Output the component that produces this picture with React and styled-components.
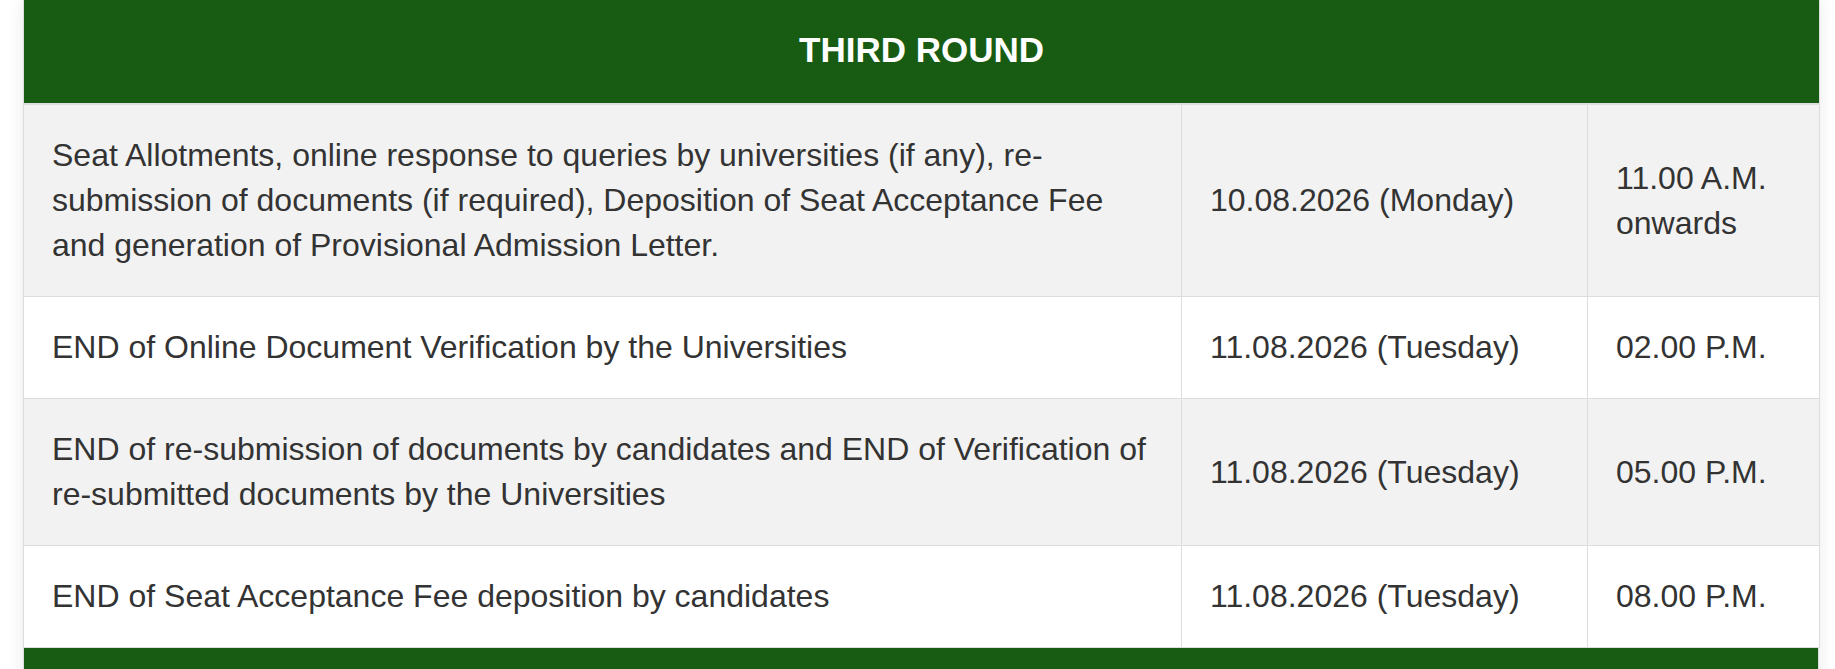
import React from "react";
import styled, { createGlobalStyle } from "styled-components";

const GlobalStyle = createGlobalStyle`
  html, body {
    margin: 0;
    padding: 0;
    background: #ffffff;
    font-family: "Liberation Sans", Arial, Helvetica, sans-serif;
  }
`;

const Page = styled.div`
  padding: 0 16px 0 23px;
`;

const Card = styled.section`
  box-shadow: 0 0 16px rgba(0, 0, 0, 0.09);
  background: #ffffff;
`;

const Table = styled.table`
  width: 100%;
  border-collapse: collapse;
  table-layout: fixed;
  border: 1px solid #dddddd;
  border-top: none;
`;

const HeadCell = styled.th`
  background: #175c12;
  color: #ffffff;
  font-size: 35px;
  font-weight: 700;
  line-height: 50px;
  text-align: center;
  padding: 25px 28px 28px;
  border: 1px solid #dddddd;
  border-top: none;
  border-bottom: 2px solid #dddddd;
`;

const Row = styled.tr`
  background: ${(p) => (p.$striped ? "#f2f2f2" : "#ffffff")};
`;

const Cell = styled.td`
  padding: 28px;
  font-size: 32px;
  line-height: 45px;
  color: #333333;
  border: 1px solid #dddddd;
  vertical-align: middle;
  text-align: left;
`;

const NextHead = styled.th`
  background: #175c12;
  color: #ffffff;
  font-size: 35px;
  font-weight: 700;
  line-height: 50px;
  text-align: center;
  padding: 28px;
  border: 1px solid #dddddd;
  border-top: none;
`;

const rows = [
  {
    event:
      "Seat Allotments, online response to queries by universities (if any), re-submission of documents (if required), Deposition of Seat Acceptance Fee and generation of Provisional Admission Letter.",
    date: "10.08.2026 (Monday)",
    time: "11.00 A.M. onwards",
  },
  {
    event: "END of Online Document Verification by the Universities",
    date: "11.08.2026 (Tuesday)",
    time: "02.00 P.M.",
  },
  {
    event:
      "END of re-submission of documents by candidates and END of Verification of re-submitted documents by the Universities",
    date: "11.08.2026 (Tuesday)",
    time: "05.00 P.M.",
  },
  {
    event: "END of Seat Acceptance Fee deposition by candidates",
    date: "11.08.2026 (Tuesday)",
    time: "08.00 P.M.",
  },
];

export default function App() {
  return (
    <>
      <GlobalStyle />
      <Page>
        <Card>
          <Table>
            <colgroup>
              <col style={{ width: 1158 }} />
              <col style={{ width: 406 }} />
              <col style={{ width: 232 }} />
            </colgroup>
            <thead>
              <tr>
                <HeadCell colSpan={3}>THIRD ROUND</HeadCell>
              </tr>
            </thead>
            <tbody>
              {rows.map((r, i) => (
                <Row key={i} $striped={i % 2 === 0}>
                  <Cell>{r.event}</Cell>
                  <Cell>{r.date}</Cell>
                  <Cell>{r.time}</Cell>
                </Row>
              ))}
            </tbody>
          </Table>
          <Table>
            <thead>
              <tr>
                <NextHead>&nbsp;</NextHead>
              </tr>
            </thead>
          </Table>
        </Card>
      </Page>
    </>
  );
}
